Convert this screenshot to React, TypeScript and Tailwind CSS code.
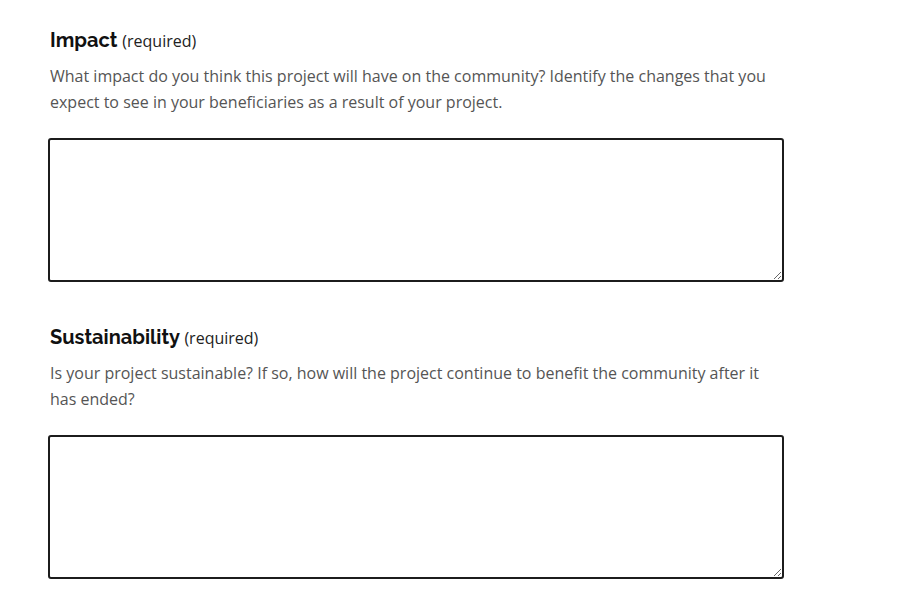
import React from 'react';

interface FieldProps {
    title: string;
    description: string;
}

const Field: React.FC<FieldProps> = ({ title, description }) => (
    <div className="flex flex-col">
        <h3 className="text-[20px] leading-[24px] text-[#111] font-['Raleway','Lato',sans-serif] font-bold pl-[2px]">
            {title}{' '}
            <span className="font-['Open_Sans',sans-serif] font-normal text-[16px] text-[#222]">(required)</span>
        </h3>
        <p className="mt-[10px] pl-[2px] text-[16px] leading-[26px] text-[#555] font-['Open_Sans',sans-serif]">
            {description}
        </p>
        <textarea className="mt-[23px] h-[144px] w-full border-2 border-[#1c1c1c] rounded-[3px] bg-white outline-none" />
    </div>
);

export default function App() {
    return (
        <div className="min-h-screen bg-white pt-[28px] pl-[48px]">
            <div className="w-[736px] flex flex-col gap-[43px]">
                <Field
                    title="Impact"
                    description="What impact do you think this project will have on the community? Identify the changes that you expect to see in your beneficiaries as a result of your project."
                />
                <Field
                    title="Sustainability"
                    description="Is your project sustainable? If so, how will the project continue to benefit the community after it has ended?"
                />
            </div>
        </div>
    );
}
